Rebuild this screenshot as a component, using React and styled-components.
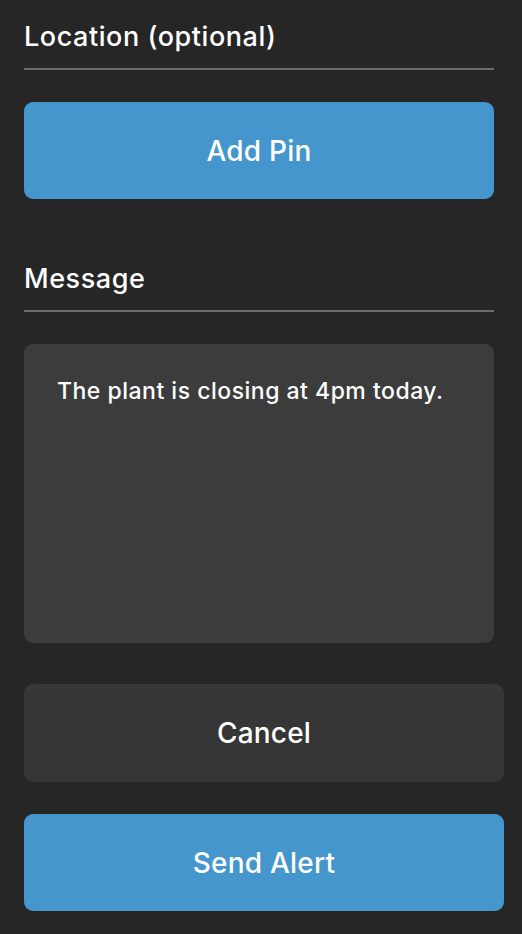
import React from 'react'
import styled, { createGlobalStyle } from 'styled-components'

const GlobalStyle = createGlobalStyle`
  html, body {
    margin: 0;
    padding: 0;
    background: #262626;
  }
  body {
    font-family: Inter, Lato, "Noto Sans", sans-serif;
    font-weight: 500;
    color: #ffffff;
    -webkit-font-smoothing: antialiased;
  }
`

const Form = styled.div`
  display: flex;
  flex-direction: column;
  padding: 21px 28px 23px 24px;
  min-height: 934px;
  box-sizing: border-box;
`

const FieldLabel = styled.div`
  font-size: 27px;
  line-height: 32px;
  letter-spacing: 0.55px;
  padding-bottom: 15px;
  border-bottom: 2px solid #6a6a6a;
  margin-top: ${p => p.$gap || 0}px;
`

const Button = styled.button`
  display: flex;
  align-items: center;
  justify-content: center;
  height: ${p => p.$h || 97}px;
  margin-top: ${p => p.$gap || 32}px;
  margin-right: ${p => (p.$wide ? -10 : 0)}px;
  border: none;
  border-radius: 9px;
  background: ${p => (p.$variant === 'dark' ? '#363636' : '#4496cc')};
  color: #ffffff;
  font-family: inherit;
  font-weight: inherit;
  font-size: 28px;
  letter-spacing: 0.2px;
  cursor: pointer;
`

const MessageBox = styled.div`
  margin-top: 32px;
  height: 299px;
  box-sizing: border-box;
  padding: 33px 33px;
  border-radius: 9px;
  background: #3c3c3c;
  font-size: 23px;
  line-height: 28px;
  letter-spacing: 0.5px;
`

export default function App() {
  return (
    <>
      <GlobalStyle />
      <Form>
        <FieldLabel>Location (optional)</FieldLabel>
        <Button>Add Pin</Button>

        <FieldLabel $gap={64}>Message</FieldLabel>
        <MessageBox>The plant is closing at 4pm today.</MessageBox>

        <Button $variant="dark" $gap={41} $h={98} $wide>Cancel</Button>
        <Button $wide>Send Alert</Button>
      </Form>
    </>
  )
}
